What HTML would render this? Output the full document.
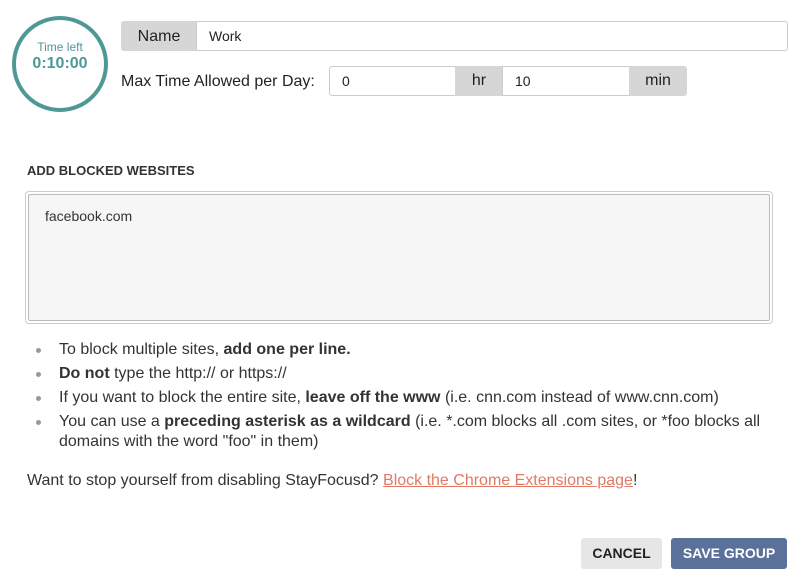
<!DOCTYPE html>
<html><head><style>
body{margin:0;width:794px;height:581px;background:#fff;font-family:"Liberation Sans",sans-serif;color:#222;position:relative;overflow:hidden}
.a{position:absolute}
.circle{left:12px;top:16px;width:88px;height:88px;border:4px solid #4e9896;border-radius:50%;text-align:center;color:#4e9896}
.box{border:1px solid #ccc;box-sizing:border-box;background:#fff;font-size:14px;padding-left:12px;line-height:28px}
.lab{background:#d6d6d6;box-sizing:border-box;font-size:16px;text-align:center;line-height:30px;color:#222}
ul{margin:0;padding:0;list-style:none}
li{position:relative;padding-left:34px;font-size:16px;line-height:20px;margin-bottom:4px;color:#333}
li:before{content:"";position:absolute;left:11px;top:8px;width:5px;height:5px;border-radius:50%;background:#999}
.btn{font-size:14px;font-weight:bold;text-align:center;line-height:31px;border-radius:3px;height:31px}
</style></head><body>
<div class="a circle"><div style="margin-top:20px;font-size:12px">Time left</div><div style="font-size:16px;font-weight:bold;margin-top:1px">0:10:00</div></div>
<div class="a lab" style="left:121px;top:21px;width:76px;height:30px;border-radius:3px 0 0 3px;line-height:31px">Name</div>
<div class="a box" style="left:196px;top:21px;width:592px;height:30px;border-radius:0 3px 3px 0">Work</div>
<div class="a" style="left:121px;top:73px;font-size:16px">Max Time Allowed per Day:</div>
<div class="a box" style="left:329px;top:66px;width:127px;height:30px;border-radius:3px 0 0 3px">0</div>
<div class="a lab" style="left:455px;top:66px;width:48px;height:30px">hr</div>
<div class="a box" style="left:502px;top:66px;width:128px;height:30px">10</div>
<div class="a lab" style="left:629px;top:66px;width:58px;height:30px;border-radius:0 3px 3px 0">min</div>
<div class="a" style="left:27px;top:163px;font-size:13px;font-weight:bold;color:#333">ADD BLOCKED WEBSITES</div>
<div class="a" style="left:25px;top:191px;width:748px;height:133px;box-sizing:border-box;border:1px solid #ccc;border-radius:4px;padding:2px"><div style="border:1px solid #bbb;border-radius:2px;background:#f6f6f6;height:100%;box-sizing:border-box;padding:13px 16px;font-size:14px;color:#333">facebook.com</div></div>
<ul class="a" style="left:25px;top:340px;width:760px">
<li>To block multiple sites, <b>add one per line.</b></li>
<li><b>Do not</b> type the http:// or https://</li>
<li>If you want to block the entire site, <b>leave off the www</b> (i.e. cnn.com instead of www.cnn.com)</li>
<li>You can use a <b>preceding asterisk as a wildcard</b> (i.e. *.com blocks all .com sites, or *foo blocks all domains with the word "foo" in them)</li>
</ul>
<div class="a" style="left:27px;top:472px;font-size:16px;color:#333">Want to stop yourself from disabling StayFocusd? <span style="color:#e07a64;text-decoration:underline">Block the Chrome Extensions page</span>!</div>
<div class="a btn" style="left:581px;top:538px;width:81px;background:#e6e6e6;color:#222">CANCEL</div>
<div class="a btn" style="left:671px;top:538px;width:116px;background:#5b709b;color:#fff">SAVE GROUP</div>
</body></html>
